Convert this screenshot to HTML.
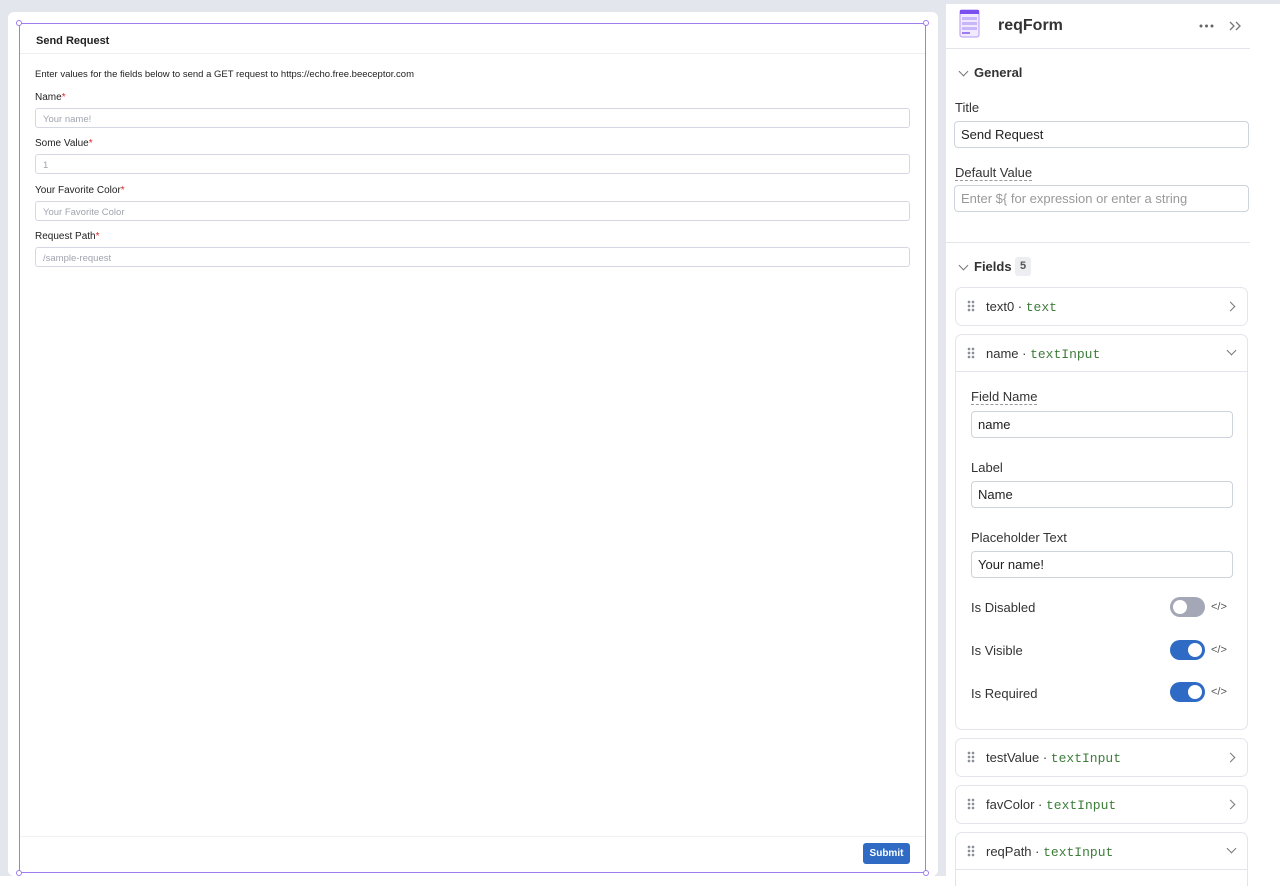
<!DOCTYPE html>
<html style="overflow:hidden;height:888px"><head><meta charset="utf-8"><style>
*{box-sizing:border-box;margin:0;padding:0}
body{width:1280px;height:888px;position:relative;background:#fff;font-family:"Liberation Sans",sans-serif;color:#1f2937;overflow:hidden}
.a{position:absolute}
.lbl{font-size:10px;color:#222}
.req{color:#e02424}
.inp{position:absolute;left:35px;width:875px;height:20px;border:1px solid #d5d8e3;border-radius:3px;font-size:9.5px;color:#a0a4ae;padding:5px 0 0 7px}
.ri{position:absolute;border:1px solid #cfd3dc;border-radius:4px;font-size:13px;color:#222;padding:0 0 0 6px;display:flex;align-items:center;background:#fff}
.rl{position:absolute;font-size:13px;color:#333}
.card{position:absolute;left:955px;width:293px;border:1px solid #e3e5ea;border-radius:7px;background:#fff}
.row{position:absolute;font-size:13px;color:#333;left:986px}
.mono{font-family:"Liberation Mono",monospace;color:#3d7d3a}
.drag{position:absolute;left:967px;width:8px;height:12px;background:radial-gradient(circle,#8a8f99 1.2px,transparent 1.5px) 0 0/4px 4px}
.chev{position:absolute;width:7px;height:7px;border-right:1.5px solid #777;border-bottom:1.5px solid #777}
.tg{position:absolute;left:1170px;width:35px;height:20px;border-radius:10px;background:#2f6bc5}
.tg::after{content:"";position:absolute;top:3px;right:3px;width:14px;height:14px;border-radius:50%;background:#fff}
.tg.off{background:#a4a8b6}.tg.off::after{right:auto;left:3px}
.code{position:absolute;left:1211px;font-size:11px;color:#555}
</style></head><body>
<div class="a" style="left:0;top:0;width:946px;height:876px;background:#e4e6ed"></div>
<div class="a" style="left:946px;top:0;width:334px;height:4px;background:#e4e6ed"></div>
<div class="a" style="left:8px;top:12px;width:930px;height:864px;background:#fff;border-radius:6px"></div>
<div class="a" style="left:19px;top:23px;width:907px;height:850px;border:1px solid #9d7cf0"></div>
<div class="a" style="left:16px;top:20px;width:6px;height:6px;border:1px solid #9d7cf0;border-radius:50%;background:#fff"></div>
<div class="a" style="left:923px;top:20px;width:6px;height:6px;border:1px solid #9d7cf0;border-radius:50%;background:#fff"></div>
<div class="a" style="left:16px;top:870px;width:6px;height:6px;border:1px solid #9d7cf0;border-radius:50%;background:#fff"></div>
<div class="a" style="left:923px;top:870px;width:6px;height:6px;border:1px solid #9d7cf0;border-radius:50%;background:#fff"></div>
<div class="a" style="left:20px;top:53px;width:905px;height:1px;background:#eceef2"></div>
<div class="a" style="left:20px;top:836px;width:905px;height:1px;background:#f0f1f4"></div>
<div class="a" style="left:36px;top:35px;font-size:11px;font-weight:bold;color:#222">Send Request</div>
<div class="a lbl" style="left:35px;top:69px;font-size:9.5px">Enter values for the fields below to send a GET request to https://echo.free.beeceptor.com</div>
<div class="a lbl" style="left:35px;top:92px">Name<span class="req">*</span></div>
<div class="inp" style="top:108px">Your name!</div>
<div class="a lbl" style="left:35px;top:138px">Some Value<span class="req">*</span></div>
<div class="inp" style="top:154px">1</div>
<div class="a lbl" style="left:35px;top:185px">Your Favorite Color<span class="req">*</span></div>
<div class="inp" style="top:201px">Your Favorite Color</div>
<div class="a lbl" style="left:35px;top:231px">Request Path<span class="req">*</span></div>
<div class="inp" style="top:247px">/sample-request</div>
<div class="a" style="left:863px;top:843px;width:47px;height:21px;background:#2f6bc5;border-radius:3px;color:#fff;font-size:10px;font-weight:bold;text-align:center;line-height:21px">Submit</div>

<svg class="a" style="left:959px;top:9px" width="22" height="29" viewBox="0 0 22 29"><rect x="1" y="1" width="19" height="27" rx="2" fill="#f1eafe" stroke="#b59af5"/><rect x="1" y="1" width="19" height="4" fill="#7b4ef0"/><rect x="3" y="8" width="15" height="3" fill="#c9b5fa"/><rect x="3" y="13" width="15" height="3" fill="#c9b5fa"/><rect x="3" y="18" width="15" height="3" fill="#c9b5fa"/><rect x="3" y="23" width="8" height="2" fill="#9d7cf0"/></svg>
<div class="a" style="left:998px;top:17px;font-size:16px;font-weight:bold;color:#333">reqForm</div>
<svg class="a" style="left:1199px;top:24px" width="16" height="4"><circle cx="2" cy="2" r="1.5" fill="#666"/><circle cx="7.5" cy="2" r="1.5" fill="#666"/><circle cx="13" cy="2" r="1.5" fill="#666"/></svg>
<svg class="a" style="left:1229px;top:21px" width="13" height="10" fill="none" stroke="#777" stroke-width="1.3"><path d="M1 1l4 4-4 4M7 1l4 4-4 4"/></svg>
<div class="a" style="left:946px;top:48px;width:304px;height:1px;background:#e3e5ea"></div>
<div class="chev" style="left:960px;top:68px;transform:rotate(45deg)"></div>
<div class="a" style="left:974px;top:65px;font-size:13px;font-weight:bold;color:#333">General</div>
<div class="rl" style="left:955px;top:100px">Title</div>
<div class="ri" style="left:954px;top:121px;width:295px;height:27px">Send Request</div>
<div class="rl" style="left:955px;top:165px;border-bottom:1px dashed #999">Default Value</div>
<div class="ri" style="left:954px;top:185px;width:295px;height:27px;color:#999">Enter ${ for expression or enter a string</div>
<div class="a" style="left:946px;top:242px;width:304px;height:1px;background:#e3e5ea"></div>
<div class="chev" style="left:960px;top:262px;transform:rotate(45deg)"></div>
<div class="a" style="left:974px;top:259px;font-size:13px;font-weight:bold;color:#333">Fields</div>
<div class="a" style="left:1015px;top:257px;width:16px;height:19px;background:#eceef2;border-radius:3px;font-size:11px;font-weight:bold;color:#555;text-align:center;line-height:19px">5</div>

<div class="card" style="top:287px;height:39px"></div>
<div class="drag" style="top:300px"></div><div class="row" style="top:299px">text0 · <span class="mono">text</span></div>
<div class="chev" style="left:1227px;top:303px;transform:rotate(-45deg)"></div>

<div class="card" style="top:334px;height:396px"></div>
<div class="a" style="left:956px;top:371px;width:291px;height:1px;background:#e3e5ea"></div>
<div class="drag" style="top:347px"></div><div class="row" style="top:346px">name · <span class="mono">textInput</span></div>
<div class="chev" style="left:1228px;top:347px;transform:rotate(45deg)"></div>
<div class="rl" style="left:971px;top:389px;border-bottom:1px dashed #999">Field Name</div>
<div class="ri" style="left:971px;top:411px;width:262px;height:27px">name</div>
<div class="rl" style="left:971px;top:460px">Label</div>
<div class="ri" style="left:971px;top:481px;width:262px;height:27px">Name</div>
<div class="rl" style="left:971px;top:530px">Placeholder Text</div>
<div class="ri" style="left:971px;top:551px;width:262px;height:27px">Your name!</div>
<div class="rl" style="left:971px;top:600px">Is Disabled</div><div class="tg off" style="top:597px"></div><div class="code" style="top:601px">&lt;/&gt;</div>
<div class="rl" style="left:971px;top:643px">Is Visible</div><div class="tg" style="top:640px"></div><div class="code" style="top:644px">&lt;/&gt;</div>
<div class="rl" style="left:971px;top:686px">Is Required</div><div class="tg" style="top:682px"></div><div class="code" style="top:686px">&lt;/&gt;</div>

<div class="card" style="top:738px;height:39px"></div>
<div class="drag" style="top:751px"></div><div class="row" style="top:750px">testValue · <span class="mono">textInput</span></div>
<div class="chev" style="left:1227px;top:754px;transform:rotate(-45deg)"></div>
<div class="card" style="top:785px;height:39px"></div>
<div class="drag" style="top:798px"></div><div class="row" style="top:797px">favColor · <span class="mono">textInput</span></div>
<div class="chev" style="left:1227px;top:801px;transform:rotate(-45deg)"></div>
<div class="card" style="top:832px;height:54px;border-bottom:none;border-radius:7px 7px 0 0"></div>
<div class="a" style="left:956px;top:869px;width:291px;height:1px;background:#e3e5ea"></div>
<div class="drag" style="top:845px"></div><div class="row" style="top:844px">reqPath · <span class="mono">textInput</span></div>
<div class="chev" style="left:1228px;top:845px;transform:rotate(45deg)"></div>
<div class="a" style="left:0;top:876px;width:946px;height:12px;background:#fff"></div>
</body></html>
